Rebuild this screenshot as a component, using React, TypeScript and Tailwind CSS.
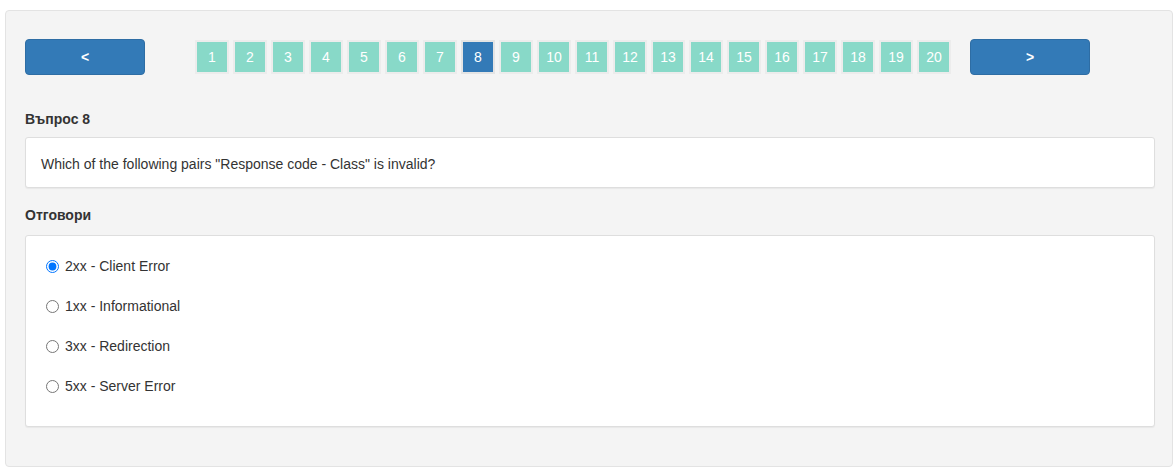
import React from "react";

const nums = Array.from({ length: 20 }, (_, i) => i + 1);
const answers = [
  "2xx - Client Error",
  "1xx - Informational",
  "3xx - Redirection",
  "5xx - Server Error",
];

export default function App() {
  return (
    <div
      className="bg-white w-[1173px] h-[471px] pt-[10px] pl-[5px] text-[#333]"
      style={{ fontFamily: '"Liberation Sans", Arial, sans-serif' }}
    >
      <div className="bg-[#f4f4f4] border border-[#e3e3e3] rounded-[4px] w-[1168px] h-[457px] pl-[19px] pr-[17px] pt-[28px]">
        <div className="flex items-center h-[36px]">
          <button className="w-[120px] h-[36px] bg-[#337ab7] border border-[#2e6da4] rounded-[4px] text-white text-[14px] font-bold">
            &lt;
          </button>
          <div className="flex gap-[4px] ml-[50px]">
            {nums.map((n) => (
              <div
                key={n}
                className={
                  n === 8
                    ? "w-[34px] h-[34px] flex items-center justify-center border-2 border-[#e4e4e4] bg-[#337ab7] text-white text-[14px]"
                    : "w-[34px] h-[34px] flex items-center justify-center border-2 border-[#ececec] bg-[#88d9c8] text-white text-[14px]"
                }
              >
                {n}
              </div>
            ))}
          </div>
          <button className="ml-[19px] w-[120px] h-[36px] bg-[#337ab7] border border-[#2e6da4] rounded-[4px] text-white text-[14px] font-bold">
            &gt;
          </button>
        </div>

        <div className="mt-[35px] mb-[9px] text-[14px] leading-[18px] font-bold">Въпрос 8</div>
        <div className="bg-white border border-[#dedede] rounded-[3px] shadow-[0_1px_1px_rgba(0,0,0,0.05)] pl-[15px] pt-[17px] pb-[14px] text-[14px] leading-[18px]">
          Which of the following pairs "Response code - Class" is invalid?
        </div>

        <div className="mt-[18px] mb-[11px] text-[14px] leading-[18px] font-bold">Отговори</div>
        <div className="bg-white border border-[#dedede] rounded-[3px] shadow-[0_1px_1px_rgba(0,0,0,0.05)] pl-[20px] pt-[10px] pb-[20px]">
          {answers.map((a, i) => (
            <label key={a} className="flex items-center h-[40px] text-[14px]">
              <input
                type="radio"
                name="ans"
                defaultChecked={i === 0}
                className="w-[13px] h-[13px] m-0 mr-[6px]"
              />
              {a}
            </label>
          ))}
        </div>
      </div>
    </div>
  );
}
